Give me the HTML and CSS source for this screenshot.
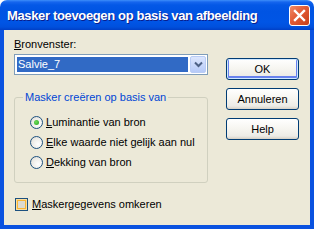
FILE: index.html
```html
<!DOCTYPE html>
<html>
<head>
<meta charset="utf-8">
<link rel="stylesheet" href="styles.css">
</head>
<body>
<div class="window">
  <div class="titlebar">
    <span class="title">Masker toevoegen op basis van afbeelding</span>
    <span class="close">
      <svg width="13" height="13" viewBox="0 0 13 13"><path d="M2 2 L11 11 M11 2 L2 11" stroke="#fff" stroke-width="2.4" stroke-linecap="square"/></svg>
    </span>
  </div>
  <div class="client">
    <div class="main">
      <div class="lbl"><u>B</u>ronvenster:</div>
      <div class="combo">
        <span class="combo-value">Salvie_7</span>
        <span class="combo-btn">
          <svg width="9" height="7" viewBox="0 0 9 7"><path d="M1 1.5 L4.5 5 L8 1.5" fill="none" stroke="#4D6185" stroke-width="2"/></svg>
        </span>
      </div>
      <fieldset class="group">
        <legend class="legend">Masker creëren op basis van</legend>
        <div class="opt"><span class="radio checked"></span><span><u>L</u>uminantie van bron</span></div>
        <div class="opt"><span class="radio"></span><span><u>E</u>lke waarde niet gelijk aan nul</span></div>
        <div class="opt"><span class="radio"></span><span><u>D</u>ekking van bron</span></div>
      </fieldset>
      <div class="check-row"><span class="check"></span><span><u>M</u>askergegevens omkeren</span></div>
    </div>
    <div class="buttons">
      <div class="btn default">OK</div>
      <div class="btn">Annuleren</div>
      <div class="btn">Help</div>
    </div>
  </div>
</div>
</body>
</html>
```
FILE: styles.css
```css
html, body {
  margin: 0;
  padding: 0;
  background: #ffffff;
}
.window {
  width: 314px;
  height: 229px;
  display: flex;
  flex-direction: column;
  font-family: "Liberation Sans", Arial, sans-serif;
  font-size: 11px;
  color: #000;
}
.titlebar {
  height: 30px;
  flex: none;
  display: flex;
  align-items: center;
  justify-content: space-between;
  padding: 0 4px 0 7px;
  box-sizing: border-box;
  border-radius: 7px 7px 0 0;
  background: linear-gradient(to bottom, #3D8EF9 0px, #1666EE 2px, #0458E6 5px, #0054E3 12px, #0055E5 22px, #0050DD 27px, #003FC6 30px);
}
.title {
  color: #fff;
  font-weight: bold;
  font-size: 13px;
  letter-spacing: -0.35px;
  line-height: 16px;
  margin-top: 1px;
  text-shadow: 1px 1px 0 #0A1E8C;
  white-space: nowrap;
}
.close {
  width: 21px;
  height: 21px;
  box-sizing: border-box;
  border: 1px solid #fff;
  border-radius: 3px;
  background: linear-gradient(135deg, #F08A68 0%, #E25B35 45%, #C73F18 100%);
  display: flex;
  align-items: center;
  justify-content: center;
  margin-top: 1px;
}
.client {
  flex: 1;
  display: flex;
  background: #ECE9D8;
  border: 4px solid #0A52E0;
  border-top: none;
  padding: 8px 0 0 10px;
}
.main {
  width: 194px;
  display: flex;
  flex-direction: column;
}
.lbl {
  line-height: 13px;
}
.combo {
  margin-top: 3px;
  height: 21px;
  box-sizing: border-box;
  border: 1px solid #7F9DB9;
  background: #fff;
  padding: 1px;
  display: flex;
  gap: 2px;
}
.combo-value {
  flex: 1;
  margin: 1px 0 1px 1px;
  background: #316AC5;
  color: #fff;
  line-height: 15px;
  padding-left: 1px;
}
.combo-btn {
  width: 16px;
  box-sizing: border-box;
  border: 1px solid #B9CCF5;
  border-radius: 2px;
  background: linear-gradient(to bottom, #DCE6FD, #B6CAF8);
  display: flex;
  align-items: center;
  justify-content: center;
}
.group {
  margin: 16px 0 0 0;
  padding: 8px 0 10px 8px;
  border: 1px solid #D0D0BF;
  border-radius: 3px;
}
.legend {
  padding: 0 2px;
  color: #0046D5;
  line-height: 13px;
}
.opt {
  height: 20px;
  display: flex;
  align-items: center;
  gap: 3px;
  padding-left: 7px;
}
.radio {
  width: 13px;
  height: 13px;
  box-sizing: border-box;
  border: 1px solid #1C5180;
  border-radius: 50%;
  background: radial-gradient(circle at 65% 65%, #ffffff 0%, #ECEBE6 60%, #D6D3C7 100%);
  display: flex;
  align-items: center;
  justify-content: center;
}
.radio.checked::after {
  content: "";
  width: 5px;
  height: 5px;
  border-radius: 50%;
  background: radial-gradient(circle at 40% 40%, #71DF58, #21A121);
}
.check-row {
  margin-top: 11px;
  height: 20px;
  display: flex;
  align-items: center;
  gap: 4px;
  padding-left: 1px;
}
.check {
  width: 13px;
  height: 13px;
  box-sizing: border-box;
  border: 1px solid #1C5180;
  background: #DDDBD0;
  box-shadow: inset 0 0 0 1px #FEDF9C, inset 0 0 0 2px #F8B636;
}
.buttons {
  margin-left: 18px;
  margin-top: 20px;
  width: 73px;
  display: flex;
  flex-direction: column;
  gap: 8px;
}
.btn {
  height: 22px;
  box-sizing: border-box;
  border: 1px solid #003C74;
  border-radius: 3px;
  background: linear-gradient(to bottom, #FFFFFF 0%, #F6F5F0 50%, #ECEBE6 85%, #D6D0C5 100%);
  display: flex;
  align-items: center;
  justify-content: center;
  line-height: 13px;
}
.btn.default {
  box-shadow: inset 0 0 0 1px #CEE7FF, inset 0 -1px 0 2px #6982EE;
}
```
